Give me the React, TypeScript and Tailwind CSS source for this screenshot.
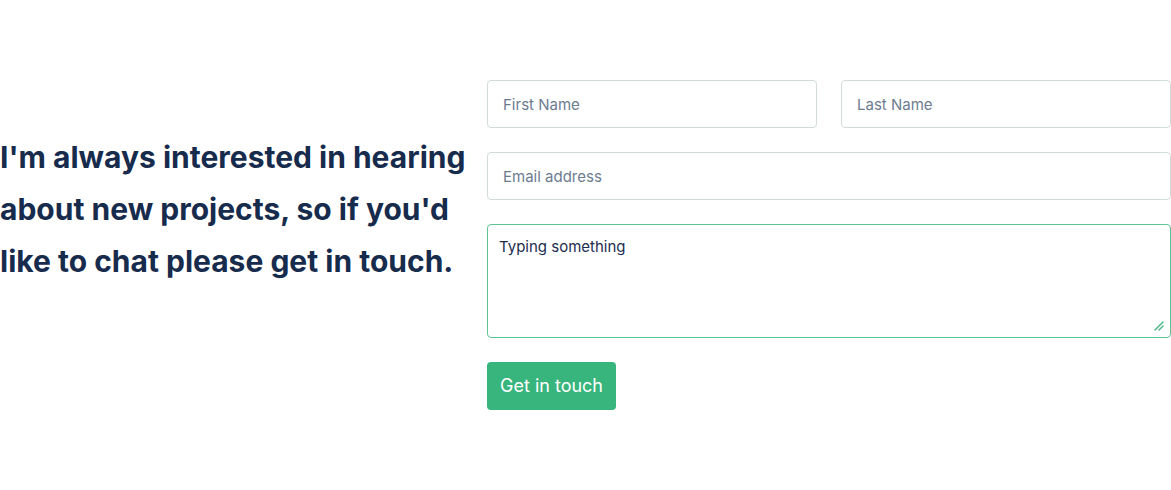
import { useState } from "react";

const inputClass =
  "h-12 w-full rounded border border-[#d3dadb] bg-white px-[15px] text-[15px] text-[#1b2d4f] outline-none placeholder:text-[#6d7b8f]";

export default function App() {
  const [message, setMessage] = useState("Typing something");

  return (
    <div className="flex min-h-[490px] w-[1171px] items-start gap-[15px] bg-white py-20 font-['Inter',sans-serif]">
      <div className="w-[472px] shrink-0 pt-[51px]">
        <p className="text-[30px] font-bold leading-[52px] text-[#172b4d]">
          I'm always interested in hearing about new projects, so if you'd like to chat please get in
          touch.
        </p>
      </div>
      <form className="flex flex-1 flex-col gap-6">
        <div className="grid grid-cols-2 gap-6">
          <input type="text" placeholder="First Name" className={inputClass} />
          <input type="text" placeholder="Last Name" className={inputClass} />
        </div>
        <input type="email" placeholder="Email address" className={inputClass} />
        <div className="relative">
          <textarea
            value={message}
            onChange={(e) => setMessage(e.target.value)}
            className="block h-[114px] w-full resize-none rounded border border-[#5ec493] bg-white px-[11px] py-[11px] text-[15px] text-[#1b2d4f] outline-none"
          />
          <svg
            className="pointer-events-none absolute bottom-[7px] right-[7px] h-[10px] w-[10px]"
            viewBox="0 0 10 10"
          >
            <path d="M1 9 L9 1 M5 9 L9 5" stroke="#4cb987" strokeWidth="1.5" strokeLinecap="round" />
          </svg>
        </div>
        <div>
          <button
            type="button"
            className="h-12 rounded bg-[#38b47d] px-[13px] text-lg font-normal text-white"
          >
            Get in touch
          </button>
        </div>
      </form>
    </div>
  );
}
